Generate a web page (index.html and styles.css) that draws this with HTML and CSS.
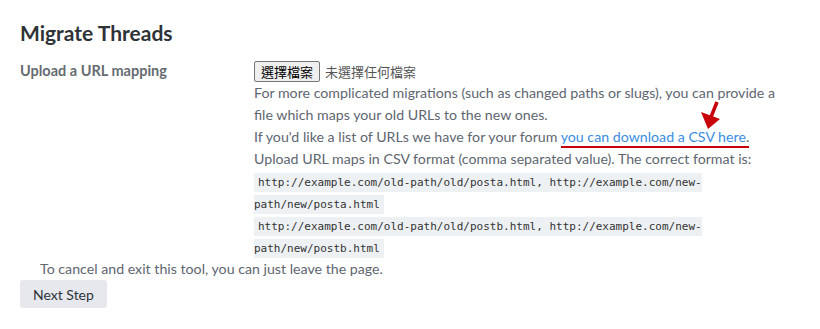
FILE: index.html
```html
<!DOCTYPE html>
<html lang="en">
<head>
<meta charset="UTF-8">
<title>Migrate Threads</title>
<link rel="stylesheet" href="styles.css">
</head>
<body>

<div id="page">
  <h2 class="title">Migrate Threads</h2>

  <div class="row">
    <div class="label">Upload a URL mapping</div>
    <div class="controls">
      <div class="file">
        <span class="file-btn">選擇檔案</span>
        <span class="file-name">未選擇任何檔案</span>
      </div>
      <div class="help">
        For more complicated migrations (such as changed paths or slugs), you can provide a file which maps your old URLs to the new ones.<br>
        If you'd like a list of URLs we have for your forum <span class="mark"><a href="#">you can download a CSV here</a>.
          <svg class="arrow" width="24" height="30" viewBox="0 0 24 30">
            <path d="M18 1 L12 16" stroke="#c8000a" stroke-width="3.5" fill="none"/>
            <path d="M2 11 L21 18 L9 28 Z" fill="#c8000a"/>
          </svg>
        </span><br>
        Upload URL maps in CSV format (comma separated value). The correct format is:<br>
        <code>http://example.com/old-path/old/posta.html, http://example.com/new-path/new/posta.html</code><br>
        <code>http://example.com/old-path/old/postb.html, http://example.com/new-path/new/postb.html</code>
      </div>
    </div>
  </div>

  <p class="cancel">To cancel and exit this tool, you can just leave the page.</p>
  <button class="next">Next Step</button>
</div>

</body>
</html>
```

FILE: styles.css
```css
body {
  margin: 0;
  font-family: Lato, "Noto Sans CJK TC", sans-serif;
  font-size: 14.2px;
  color: #5e6670;
  background: #fff;
}
#page {
  padding: 20px 20px 0 20px;
}
.title {
  margin: 0 0 14px 0;
  font-size: 21px;
  font-weight: 700;
  color: #2f3337;
  line-height: 26px;
}
.row {
  display: flex;
}
.label {
  width: 234px;
  flex-shrink: 0;
  font-size: 14.5px;
  font-weight: 700;
  color: #666b72;
  line-height: 22px;
}
.controls {
  width: 536px;
}
.file {
  display: flex;
  align-items: center;
  gap: 5px;
  height: 22px;
  font-family: "Noto Sans CJK TC", sans-serif;
  font-size: 13px;
}
.file-btn {
  border: 1px solid #767676;
  border-radius: 2px;
  background: #efefef;
  color: #000;
  padding: 0 6px;
  line-height: 19px;
}
.file-name {
  color: #555;
}
.help {
  line-height: 22px;
}
.help a {
  color: #3a8de0;
  text-decoration: none;
}
.mark {
  position: relative;
  padding-bottom: 1px;
  border-bottom: 2px solid #c8000a;
}
.arrow {
  position: absolute;
  left: 138px;
  top: -27px;
}
code {
  font-family: "DejaVu Sans Mono", monospace;
  font-size: 11px;
  line-height: 1;
  color: #333;
  background: #eef1f4;
  padding: 3px 4px;
}
.cancel {
  margin: 0;
  padding-left: 20px;
  line-height: 22px;
}
.next {
  margin-top: 0;
  font-family: inherit;
  font-size: 14px;
  color: #2f3337;
  background: #e6e8ee;
  border: none;
  border-radius: 3px;
  height: 28px;
  padding: 0 13px;
}
```
